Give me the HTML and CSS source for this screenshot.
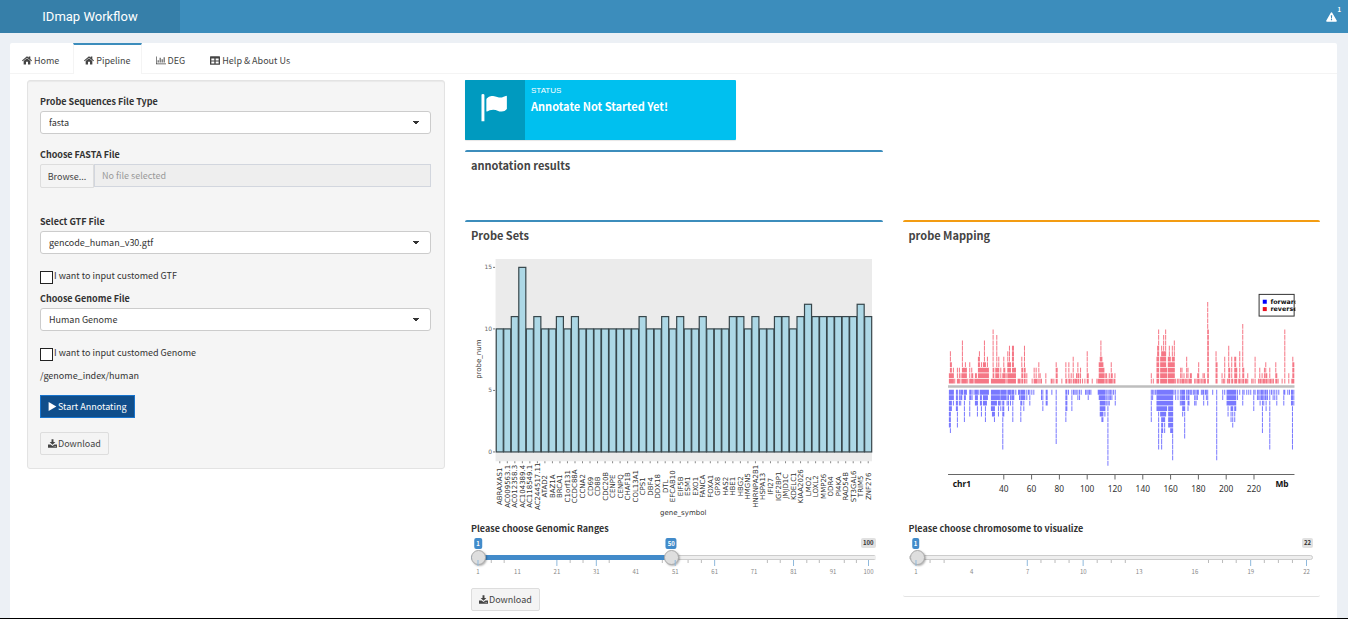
FILE: index.html
```html
<!DOCTYPE html>
<html lang="en">
<head>
<meta charset="utf-8">
<title>IDmap Workflow</title>
<link rel="stylesheet" href="styles.css">
</head>
<body>
<svg class="defs" aria-hidden="true">
  <symbol id="home" viewBox="0 0 30 26"><path d="M15 6 25 14.500V25H18V17H12V25H5V14.500Z"/><path d="M15 0 20 4V1H25V8.500L30 13 28 15.500 15 4.500 2 15.500 0 13Z"/></symbol>
  <symbol id="bars" viewBox="0 0 30 24"><path d="M0 0H2V21H30V23H0Z"/><path d="M5 11H8V18H5ZM11 4H14V18H11ZM17 8H20V18H17ZM23 2H26V18H23Z"/></symbol>
  <symbol id="grid" viewBox="0 0 30 26"><path fill-rule="evenodd" d="M2 0H28Q30 0 30 2V24Q30 26 28 26H2Q0 26 0 24V2Q0 0 2 0ZM4 7V13H13V7ZM17 7V13H26V7ZM4 16V22H13V16ZM17 16V22H26V16Z"/></symbol>
  <symbol id="download" viewBox="0 0 28 26"><path d="M11 0H17V8H23L14 17 5 8H11Z"/><path fill-rule="evenodd" d="M0 16H8L14 21 20 16H28V26H0ZM18 21V23H20V21ZM23 21V23H25V21Z"/></symbol>
  <symbol id="play" viewBox="0 0 24 28"><path d="M0 0 24 14 0 28Z"/></symbol>
</svg>

<header class="topbar">
  <a class="brand" href="#">IDmap Workflow</a>
  <nav class="topnav">
    <a class="alerts" href="#" aria-label="Warnings">
      <svg viewBox="0 0 32 28"><path fill="#fff" d="M16 0Q17.500 0 18.500 2L31.500 25Q32 28 29 28H3Q0 28 .5 25L13.500 2Q14.500 0 16 0Z"/><path fill="#3c8dbc" d="M14 9H18L17.300 18H14.700ZM14.300 20H17.700V23.500H14.300Z"/></svg>
      <span class="count">1</span>
    </a>
  </nav>
</header>

<main class="card">
  <nav class="tabs">
    <a href="#"><svg><use href="#home"/></svg>Home</a>
    <a href="#" class="active"><svg><use href="#home"/></svg>Pipeline</a>
    <a href="#"><svg><use href="#bars"/></svg>DEG</a>
    <a href="#"><svg><use href="#grid"/></svg>Help &amp; About Us</a>
  </nav>

  <div class="content">
    <form class="panel">
      <div class="field">
        <label for="type">Probe Sequences File Type</label>
        <select id="type"><option>fasta</option></select>
      </div>
      <div class="field file">
        <label for="fname">Choose FASTA File</label>
        <div class="filerow">
          <button type="button">Browse...</button>
          <input id="fname" type="text" placeholder="No file selected" readonly>
        </div>
      </div>
      <div class="field">
        <label for="gtf">Select GTF File</label>
        <select id="gtf"><option>gencode_human_v30.gtf</option></select>
      </div>
      <label class="check"><input type="checkbox"><span>I want to input customed GTF</span></label>
      <div class="field">
        <label for="genome">Choose Genome File</label>
        <select id="genome"><option>Human Genome</option></select>
      </div>
      <label class="check"><input type="checkbox"><span>I want to input customed Genome</span></label>
      <p class="path">/genome_index/human</p>
      <button type="button" class="btn primary"><svg><use href="#play"/></svg>Start Annotating</button>
      <button type="button" class="btn"><svg><use href="#download"/></svg>Download</button>
    </form>

    <div class="results">
      <section class="info">
        <div class="infoicon"><svg viewBox="0 0 80 86"><path d="M0 3Q0 0 4.500 0T9 3V84H0Z"/><path d="M16 14Q22 6 31 6C44 6 48 11 57 11C65 11 72 6 76 5Q78 5 78 7V46Q72 54 62 54C52 54 47 48 36 48C28 48 22 51 17 54Q15 54 15 52V17Z"/></svg></div>
        <div class="infotext"><span>STATUS</span><strong>Annotate Not Started Yet!</strong></div>
      </section>

      <section class="box annotation"><h3>annotation results</h3></section>

      <section class="box sets">
        <h3>Probe Sets</h3>
        <svg id="probes" class="chart" viewBox="0 0 404 271" role="img" aria-label="Probe number per gene symbol"></svg>
        <div class="slider">
          <label for="from">Please choose Genomic Ranges</label>
          <div class="bubbles"><output style="left:0%">1</output><output style="left:49.500%">50</output><span>100</span></div>
          <div class="tracks">
            <input id="from" class="filled" type="range" min="1" max="100" value="1">
            <input type="range" class="upper" min="1" max="100" value="50" aria-label="Range end">
          </div>
          <svg class="scale" id="scale1"></svg>
        </div>
        <button type="button" class="btn"><svg><use href="#download"/></svg>Download</button>
      </section>

      <section class="box mapping">
        <h3>probe Mapping</h3>
        <svg id="mapping" class="chart" viewBox="-63 -93 1212 813" role="img" aria-label="Probe positions on chr1"></svg>
        <div class="slider">
          <label for="chr">Please choose chromosome to visualize</label>
          <div class="bubbles"><output style="left:0%">1</output><span>22</span></div>
          <div class="tracks"><input id="chr" type="range" min="1" max="22" value="1"></div>
          <svg class="scale" id="scale2"></svg>
        </div>
      </section>
    </div>
  </div>
</main>
<div class="edge"></div>
<script src="charts.js"></script>
</body>
</html>
```

FILE: styles.css
```css
* { box-sizing: border-box; }

body {
  margin: 0;
  min-height: 100vh;
  display: flex;
  flex-direction: column;
  background: #ecf0f5;
  color: #333;
  font: 9px/13px "Noto Sans CJK SC", "Noto Sans", sans-serif;
}

.defs { display: none; }
button, input, select { font: inherit; color: inherit; margin: 0; }
a { color: inherit; text-decoration: none; }
h3, p { margin: 0; }

.topbar { display: flex; flex: none; height: 33px; background: #3c8dbc; color: #fff; }
.brand {
  width: 180px;
  background: #367fa9;
  font: 13px/33px Roboto, sans-serif;
  text-align: center;
}
.topnav { flex: 1; display: flex; justify-content: flex-end; padding: 7px 7px 0 0; }
.alerts { display: flex; align-items: flex-start; }
.alerts svg { width: 11px; height: 10px; margin-top: 5px; }
.count { font-size: 6px; line-height: 6px; font-weight: 700; }

.card {
  flex: 1;
  margin: 10px 11px 0 10px;
  background: #fff;
  border-radius: 2px 2px 0 0;
}

.tabs { display: flex; height: 31px; padding-left: 1px; border-bottom: 1px solid #f4f4f4; color: #444; }
.tabs a {
  display: flex;
  align-items: center;
  gap: 2px;
  height: 31px;
  margin-right: 3px;
  padding: 1px 10px 0;
  border: solid transparent;
  border-width: 2px 1px 0;
}
.tabs a.active { border-color: #3c8dbc #f4f4f4 transparent; background: #fff; }
.tabs svg { width: 10px; height: 9px; fill: #444; }

.content {
  display: grid;
  grid-template-columns: minmax(0, 418fr) minmax(0, 855fr);
  gap: 20px;
  padding: 6px 17px 0;
  align-items: start;
}

.panel {
  display: flex;
  flex-direction: column;
  align-items: stretch;
  padding: 14px 13px 13px 12px;
  background: #f5f5f5;
  border: 1px solid #e3e3e3;
  border-radius: 3px;
  box-shadow: inset 0 1px 1px rgba(0, 0, 0, .05);
}
.field { display: flex; flex-direction: column; gap: 3px; margin-bottom: 14px; }
.field.file { margin-bottom: 27px; }
.field label, .slider label { font-weight: 700; }
select {
  appearance: none;
  height: 23px;
  padding: 0 8px;
  border: 1px solid #ccc;
  border-radius: 3px;
  background: #fff;
  background-image: linear-gradient(#333, #333), linear-gradient(#333, #333), linear-gradient(#333, #333);
  background-size: 6px 1px, 4px 1px, 2px 1px;
  background-position: right 11px top 9px, right 12px top 10px, right 13px top 11px;
  background-repeat: no-repeat;
}
.filerow { display: flex; }
.filerow button {
  width: 54px;
  height: 24px;
  padding: 0;
  border: 1px solid #ddd;
  border-radius: 2px 0 0 2px;
  background: #f4f4f4;
  color: #444;
}
.filerow input {
  flex: 1;
  min-width: 0;
  height: 23px;
  padding: 0 7px;
  border: 1px solid #d2d6de;
  background: #eee;
}
.filerow input::placeholder { color: #999; opacity: 1; }

.check { display: flex; align-items: flex-start; gap: 1px; height: 13px; margin: 1px 0 10px; }
.check input {
  appearance: none;
  flex: none;
  width: 13px;
  height: 13px;
  margin-top: 2px;
  border: 1px solid #222;
  background: #fff;
}
.check input:checked { background: #3c8dbc; }
.path { margin-bottom: 13px; }

.btn {
  display: flex;
  align-items: center;
  align-self: flex-start;
  gap: 1px;
  height: 23px;
  padding: 0 7px;
  border: 1px solid #ddd;
  border-radius: 2px;
  background: #f4f4f4;
  color: #444;
}
.btn svg { width: 9px; height: 9px; fill: currentColor; }
.btn.primary { margin-bottom: 14px; background: #104e8b; border-color: #1874cd; border-radius: 0; color: #fff; }

.results {
  display: grid;
  grid-template-columns: repeat(2, minmax(0, 1fr));
  column-gap: 20px;
  align-items: start;
}
.info {
  grid-column: 1;
  display: flex;
  width: 65%;
  height: 60px;
  margin-bottom: 10px;
  border-radius: 1px;
  overflow: hidden;
  background: #00c0ef;
  color: #fff;
  box-shadow: 0 1px 1px rgba(0, 0, 0, .1);
}
.infoicon { display: flex; width: 60px; background: #009abf; padding: 14px 16px; }
.infoicon svg { width: 27px; height: 28px; fill: #fff; }
.infotext { display: flex; flex-direction: column; padding: 4px 6px; }
.infotext span { font: 8px/13px "Liberation Sans", sans-serif; }
.infotext strong { font-size: 11px; line-height: 18px; }

.box {
  display: flex;
  flex-direction: column;
  padding: 4px 7px 6px 6px;
  border-top: 2px solid #3c8dbc;
  border-radius: 2px;
}
.box h3 { font-size: 11px; line-height: 18px; margin-bottom: 4px; color: #444; }
.annotation { grid-area: 2 / 1; height: 57px; margin-bottom: 13px; }
.sets { grid-area: 3 / 1; }
.mapping { grid-area: 3 / 2; border-top-color: #f39c12; border-bottom: 1px solid #e3e3e3; padding-bottom: 8px; }
.chart { display: block; width: 100%; height: auto; margin-bottom: 3px; }

.slider { display: flex; flex-direction: column; margin-bottom: 11px; }
.slider label { margin-bottom: 3px; }
.bubbles { position: relative; height: 12px; margin: 0 7px; }
.bubbles output, .bubbles span {
  position: absolute;
  top: 0;
  padding: 0 2px;
  border-radius: 2px;
  font-size: 6px;
  line-height: 11px;
  font-weight: 700;
}
.bubbles output { transform: translateX(-50%); min-width: 7px; background: #428bca; color: #fff; }
.bubbles span { right: -7px; background: #e1e1e1; color: #333; line-height: 10px; }
.tracks { display: grid; }
.tracks input {
  grid-area: 1 / 1;
  appearance: none;
  width: 100%;
  height: 15px;
  background: none;
}
.tracks input::-webkit-slider-runnable-track {
  height: 5px;
  border: 1px solid #ccc;
  border-radius: 3px;
  background: #eee;
}
.tracks .filled::-webkit-slider-runnable-track {
  border: 0;
  background: linear-gradient(90deg, #428bca 49.500%, transparent 49.500%), linear-gradient(#ccc 1px, #eee 1px 4px, #ccc 4px);
}
.tracks input::-webkit-slider-thumb {
  appearance: none;
  width: 15px;
  height: 15px;
  margin-top: -6px;
  border: 1px solid #aaa;
  border-radius: 50%;
  background: #dedede;
  box-shadow: 1px 1px 2px rgba(0, 0, 0, .3);
  pointer-events: auto;
}
.tracks .filled::-webkit-slider-thumb { margin-top: -5px; }
.tracks .upper { pointer-events: none; }
.tracks .upper::-webkit-slider-runnable-track { background: none; border-color: transparent; }
.scale { width: calc(100% - 14px); height: 17px; margin: -5px 7px 0; overflow: visible; }
.scale text { font-size: 6px; fill: #888; text-anchor: middle; }

.names { font: 7px "DejaVu Sans", sans-serif; fill: #333; }
.values { font: 6px "DejaVu Sans", sans-serif; fill: #666; }
.mb { font: 25px "Noto Sans", sans-serif; fill: #333; text-anchor: middle; }
.bold { font: 700 25px "Noto Sans", sans-serif; fill: #111; }
.legend { font: 700 19px "DejaVu Sans", sans-serif; fill: #111; }

.edge { position: fixed; inset: auto 0 0 0; height: 1px; background: #000; }
```

FILE: charts.js
```javascript
const genes = `ABRAXAS1 10,AC009563.1 10,AC012358.3 11,AC104389.4 15,AC118549.1 10,AC244517.11 11,ATAD2 10,BAZ1A 10,BRCA1 11,C1orf131 10,CCDC88A 11,CCNA2 10,CD69 10,CD8B 10,CDC20B 10,CENPE 10,CENPQ 10,CHAF1B 10,COL13A1 10,CPS1 11,DBF4 10,DDX18 10,DTL 11,EFCAB10 10,EIF5B 11,ESM1 10,EXO1 10,FANCA 11,FOXA1 10,GPX8 10,HAS2 10,HBE1 11,HBG2 11,HMGN5 10,HNRNPA2B1 11,HSPA13 10,IFI27 10,IGF2BP1 11,JMJD1C 11,KDELC1 10,KIAA2026 11,LMO2 12,LOXL2 11,MMP26 11,ODR4 11,PI4KA 11,RAD54B 11,ST3GAL6 11,TRIM5 12,ZNF276 11`
  .split(',').map(g => g.split(' '));

function drawProbes() {
  const base = 203.7, unit = 12.29, left = 25, step = 7.51;
  let out = '<rect x="24.5" y="11" width="376" height="202" fill="#ebebeb"/>';
  genes.forEach(([name, n], i) => {
    const x = left + i * step, c = x + step / 2;
    out += `<rect x="${x + .2}" y="${base - n * unit}" width="${step - .5}" height="${n * unit}" fill="#add8e6" stroke="#37464b" stroke-width="1.2"/>`;
    out += `<path d="M${c} 213v2" stroke="#555" stroke-width=".7"/>`;
    out += `<text class="names" text-anchor="middle" transform="translate(${c + 2.5} 238) rotate(-90)">${name}</text>`;
  });
  [0, 5, 10, 15].forEach(v => {
    const y = base - v * unit;
    out += `<path d="M22 ${y}h2" stroke="#555" stroke-width=".8"/><text class="values" x="21" y="${y + 2}" text-anchor="end">${v}</text>`;
  });
  out += '<text class="names" text-anchor="middle" transform="translate(9.500 111) rotate(-90)">probe_num</text>';
  out += '<text class="names" text-anchor="middle" x="212" y="267">gene_symbol</text>';
  document.getElementById('probes').innerHTML = out;
}

// Each pair is position:stack height.
const reverse = `58:2 61:6 64:4 67:2 70:3 74:1 82:3 85:1 88:3 93:2 97:8 100:3 103:3 106:4 109:3 113:1 119:4 122:1 125:3 128:2 132:1 136:2 139:2 142:1 145:5 148:6 151:3 154:4 157:3 160:4 163:8 166:4 169:3 172:5 175:3
184:1 186:1 189:10 191:3 194:1 197:3 200:9 203:3 206:5 209:1 212:3 215:1 218:2 221:5 224:3 228:2 233:6 236:4 238:7 241:4 244:2 247:7 250:7 253:3 256:3 264:1 267:1 270:1 275:5 278:3 283:7 285:3 290:2 306:1 312:3 315:1 318:3 321:1 326:4 330:2 334:1 347:2 363:1 366:1 371:1 378:4 381:3 395:1
407:4 410:1 416:4 419:1 423:2 429:5 432:1 436:1 439:2 443:4 446:2 451:3 457:1 464:1 471:6 474:2 486:1 500:1 504:1 507:4 510:5 512:8 515:5 518:4 521:3 525:2 529:2 533:1 537:2 540:1 543:4 546:2 551:1 554:2
663:2 669:1 680:5 682:7 685:10 691:5 694:7 697:6 700:9 703:6 706:10 709:3 714:5 717:7 720:5 723:4 726:7 729:5 732:8 736:1 742:1 746:1 751:3 755:3 758:1 761:2 765:1 769:5 773:3 777:1 780:2 783:2 793:1 797:1 802:2 805:4 809:1 814:1 818:2 822:2 825:1 832:15 834:10 857:6 860:4 875:2 879:1 883:5 891:1 895:7 898:3 904:5 907:1 913:5 916:5 919:3 925:1 928:6 932:1 937:11 940:3 945:1 948:1 952:2 964:1 968:1 974:5 984:1 988:3 991:1 995:2 999:1 1002:3 1006:4 1009:2 1013:1 1018:3 1021:1 1025:1 1029:1 1036:4 1039:2 1043:1 1055:1 1063:10 1075:2 1084:1 1087:5 1090:4`;
const forward = `58:7 61:8 64:4 67:2 70:3 79:4 82:7 88:3 92:3 95:2 98:1 103:6 106:2 109:1 119:5 122:2 126:2 132:1 136:3 139:3 142:5 146:1 151:3 154:5 157:1 160:3 163:3 166:6 169:3 172:2 175:1
184:4 187:5 190:5 193:6 196:3 199:3 202:2 205:5 208:3 212:4 215:2 218:11 221:5 224:2 227:2 231:3 235:4 238:1 241:3 245:2 248:6 251:2 257:1 265:1 268:2 272:6 275:3 278:2 281:4 284:2 290:2 295:1 299:3 305:1 311:1 334:2 338:4 348:3 351:3 365:1 378:10 407:6 410:4 415:1 425:4 430:1 434:1 438:1 443:2 448:2 453:1 466:1 470:1 474:2 478:1 482:1 504:1 507:2 510:5 513:5 515:6 518:6 521:4 524:5 528:3 533:14 537:3 541:2 545:2 550:1 555:3
663:6 667:2 671:1 676:1 680:4 683:4 685:11 688:4 691:5 694:11 697:8 700:6 703:8 706:5 709:4 712:3 715:7 718:7 721:8 724:8 727:13 731:1 736:2 743:2 750:3 754:3 757:5 760:4 763:9 769:2 773:4 776:3 780:1 784:1 789:1 793:3 797:3 801:2 804:1 813:1 817:1 820:3 825:1 828:2 832:3 847:1 859:13 877:2 883:1 890:3 893:5 896:3 899:3 902:6 905:4 907:7 910:3 913:6 916:4 921:2 928:1 937:3 941:1 949:1 955:1 961:1 970:4 974:1 981:2 985:2 989:3 993:2 996:8 1000:3 1004:2 1007:4 1011:2 1018:11 1023:1 1028:2 1033:2 1039:3 1045:1 1060:3 1063:1 1072:1 1077:1 1083:3 1086:11 1090:3`;

function stacks(data, start, dir, color) {
  const lines = data.trim().split(/\s+/).map(p => {
    const [x, h] = p.split(':');
    return `M${x} ${start}v${dir * (h * 16.4 - 2)}`;
  }).join('');
  return `<path d="${lines}" fill="none" stroke="${color}" stroke-width="3" stroke-opacity=".6" stroke-dasharray="14.4 2"/>`;
}

function drawMapping() {
  let out = stacks(reverse, 313, -1, '#ee1c35') + stacks(forward, 332, 1, '#2020ff');
  out += '<path d="M54 322H1092" stroke="#bebebe" stroke-width="7"/><path d="M54 586H1092" stroke="#666" stroke-width="3"/>';
  for (let mb = 40; mb <= 220; mb += 20) {
    const x = 221 + (mb - 40) * 4.165;
    out += `<path d="M${x} 586v15" stroke="#666" stroke-width="3"/><text class="mb" x="${x}" y="638">${mb}</text>`;
  }
  out += '<text class="bold" x="68" y="623">chr1</text><text class="bold" x="1035" y="623">Mb</text>';
  out += '<rect x="986" y="46" width="105" height="65" fill="#fff" stroke="#333" stroke-width="3"/><rect x="997" y="62" width="12" height="12" fill="#00f"/><rect x="997" y="84" width="12" height="12" fill="#e81123"/>';
  out += '<svg x="1015" y="40" width="80" height="80" overflow="hidden"><text class="legend" x="5" y="35">forward</text><text class="legend" x="5" y="57">reverse</text></svg>';
  document.getElementById('mapping').innerHTML = out;
}

function drawScale(id, labels, min, max, major, minor) {
  const tick = (p, h, c) => `<line x1="${p}%" x2="${p}%" y1="0" y2="${h}" stroke="${c}"/>`;
  let out = minor.map(p => tick(p, 3, '#bbb')).join('') + major.map(p => tick(p, 6, '#8fb9dc')).join('');
  out += labels.map(v => `<text x="${(v - min) / (max - min) * 100}%" y="14">${v}</text>`).join('');
  document.getElementById(id).innerHTML = out;
}

drawProbes();
drawMapping();
drawScale('scale1', [1, 11, 21, 31, 41, 51, 61, 71, 81, 91, 100], 1, 100,
  [0, 20.2, 30.3, 50.5, 60.6, 80.8, 100], [3.4, 6.7, 23.6, 26.9, 33.6, 47.2, 53.8, 57.2, 74.1, 77.4, 84.2, 87.4, 93.8, 96.9]);
drawScale('scale2', [1, 4, 7, 10, 13, 16, 19, 22], 1, 22,
  [0, 28.5, 42.8, 85.7, 100], [3.6, 7.2, 32, 35.6, 39.2, 46.4, 50, 53.6, 74.9, 78.5, 82, 89.2, 92.8, 96.4]);
```
